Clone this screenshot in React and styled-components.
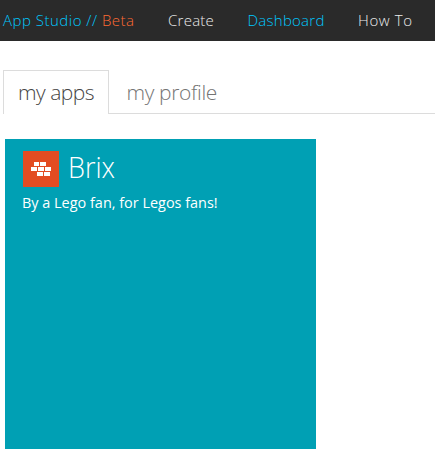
import React from 'react';
import styled, { createGlobalStyle } from 'styled-components';

const GlobalStyle = createGlobalStyle`
  * { box-sizing: border-box; }
  body {
    margin: 0;
    background: #fff;
    font-family: "Open Sans", "Noto Sans", sans-serif;
    overflow: hidden;
  }
`;

const NavBar = styled.nav`
  display: flex;
  height: 41px;
  padding-left: 3px;
  background: #2a2a2a;
`;

const NavLink = styled.a`
  flex: none;
  width: ${(p) => p.$width}px;
  font-size: 15px;
  font-weight: 300;
  line-height: 41px;
  letter-spacing: ${(p) => p.$spacing || 0}px;
  white-space: nowrap;
  color: ${(p) => (p.$active ? '#00c8ff' : '#ececec')};
`;

const Beta = styled.span`
  color: #ff6a33;
`;

const TabList = styled.div`
  display: flex;
  height: 44px;
  margin: 29px 0 0 3px;
`;

const Tab = styled.div`
  flex: ${(p) => (p.$active ? 'none' : '1')};
  width: ${(p) => (p.$active ? '106px' : 'auto')};
  padding-left: ${(p) => (p.$active ? 14 : 17.5)}px;
  border: solid #dcdcdc;
  border-width: ${(p) => (p.$active ? '1px 1px 0 1px' : '0 0 1px 0')};
  padding-top: ${(p) => (p.$active ? 0 : 1)}px;
  font-size: 21px;
  font-weight: 300;
  line-height: 43px;
  letter-spacing: ${(p) => (p.$active ? -0.5 : -0.35)}px;
  white-space: nowrap;
  color: ${(p) => (p.$active ? '#444' : '#747474')};
`;

const AppTile = styled.article`
  width: 311px;
  height: 310px;
  margin: 25px 0 0 5px;
  padding: 12px 18px;
  background: #00a0b4;
  color: #fff;
`;

const TileHeader = styled.header`
  display: flex;
  height: 36px;
  gap: 9px;
`;

const AppIcon = styled.svg`
  flex: none;
  width: 36px;
  height: 36px;
  background: #e34c22;
`;

const AppTitle = styled.h2`
  margin: 0;
  font-size: 30px;
  font-weight: 300;
  line-height: 32px;
  transform: scaleX(0.9);
  transform-origin: left;
`;

const Description = styled.p`
  margin: 6px 0 0 -1px;
  font-size: 14.45px;
  line-height: 20px;
  white-space: nowrap;
`;

const bricks = [
  [11, 11, 5], [17, 11, 6],
  [8, 16, 6], [15, 16, 6], [22, 16, 6],
  [14, 21, 6], [21, 21, 6],
];

export default function App() {
  return (
    <>
      <GlobalStyle />
      <NavBar>
        <NavLink $active $width={165} $spacing={0.5}>
          App Studio // <Beta>Beta</Beta>
        </NavLink>
        <NavLink $width={79.5} $spacing={0.25}>Create</NavLink>
        <NavLink $active $width={110.5} $spacing={0.25}>Dashboard</NavLink>
        <NavLink $width={60} $spacing={0.6}>How To</NavLink>
      </NavBar>
      <TabList>
        <Tab $active>my apps</Tab>
        <Tab>my profile</Tab>
      </TabList>
      <AppTile>
        <TileHeader>
          <AppIcon viewBox="0 0 36 36" shapeRendering="crispEdges">
            {bricks.map(([x, y, w]) => (
              <rect key={`${x}-${y}`} x={x} y={y} width={w} height={4} fill="#fff" />
            ))}
          </AppIcon>
          <AppTitle>Brix</AppTitle>
        </TileHeader>
        <Description>By a Lego fan, for Legos fans!</Description>
      </AppTile>
    </>
  );
}
